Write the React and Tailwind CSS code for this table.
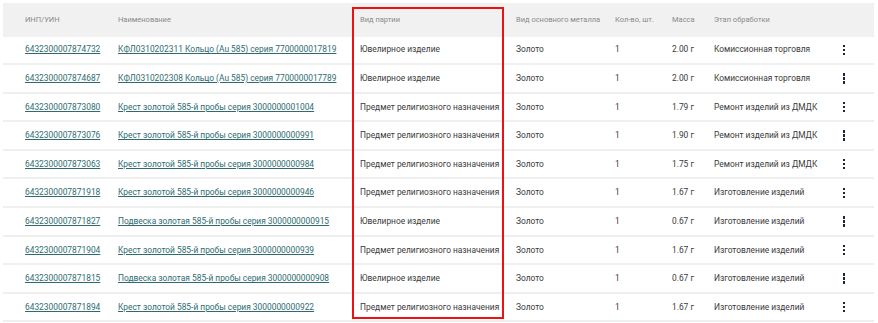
const rows = [
  ['6432300007874732', 'КФЛ0310202311 Кольцо (Au 585) серия 7700000017819', 'Ювелирное изделие', '2.00 г', 'Комиссионная торговля'],
  ['6432300007874687', 'КФЛ0310202308 Кольцо (Au 585) серия 7700000017789', 'Ювелирное изделие', '2.00 г', 'Комиссионная торговля'],
  ['6432300007873080', 'Крест золотой 585-й пробы серия 3000000001004', 'Предмет религиозного назначения', '1.79 г', 'Ремонт изделий из ДМДК'],
  ['6432300007873076', 'Крест золотой 585-й пробы серия 3000000000991', 'Предмет религиозного назначения', '1.90 г', 'Ремонт изделий из ДМДК'],
  ['6432300007873063', 'Крест золотой 585-й пробы серия 3000000000984', 'Предмет религиозного назначения', '1.75 г', 'Ремонт изделий из ДМДК'],
  ['6432300007871918', 'Крест золотой 585-й пробы серия 3000000000946', 'Предмет религиозного назначения', '1.67 г', 'Изготовление изделий'],
  ['6432300007871827', 'Подвеска золотая 585-й пробы серия 3000000000915', 'Ювелирное изделие', '0.67 г', 'Изготовление изделий'],
  ['6432300007871904', 'Крест золотой 585-й пробы серия 3000000000939', 'Предмет религиозного назначения', '1.67 г', 'Изготовление изделий'],
  ['6432300007871815', 'Подвеска золотая 585-й пробы серия 3000000000908', 'Ювелирное изделие', '0.67 г', 'Изготовление изделий'],
  ['6432300007871894', 'Крест золотой 585-й пробы серия 3000000000922', 'Предмет религиозного назначения', '1.67 г', 'Изготовление изделий'],
];

function Dots() {
  return (
    <div className="flex flex-col gap-[1.5px]">
      <span className="block w-[2px] h-[2.5px] bg-[#1c2536]" />
      <span className="block w-[2px] h-[2.5px] bg-[#1c2536]" />
      <span className="block w-[2px] h-[2.5px] bg-[#1c2536]" />
    </div>
  );
}

export default function App() {
  const cols = 'grid grid-cols-[107px_242px_156px_99px_57px_42px_124px_44px]';
  return (
    <div className="w-[878px] h-[323px] bg-white pt-[3px] pl-[3px] font-['Roboto',sans-serif] relative overflow-hidden">
      <div className="w-[871px]">
        {/* header */}
        <div className={`${cols} h-[33.5px] items-center bg-[#f1f1f1] text-[7.5px] text-[#8a8a8a]`}>
          <div className="pl-[22px]">ИНП/УИН</div>
          <div className="pl-2">Наименование</div>
          <div className="pl-2">Вид партии</div>
          <div className="pl-2">Вид основного металла</div>
          <div className="pl-2">Кол-во, шт.</div>
          <div className="pl-2">Масса</div>
          <div className="pl-2">Этап обработки</div>
          <div />
        </div>
        {rows.map((r) => (
          <div
            key={r[0]}
            className={`${cols} h-[28.6px] items-center border-b-2 border-[#efefef] text-[8.4px] text-[#3a3a3a]`}
          >
            <div className="pl-[22px]">
              <span className="underline text-[#2d6b70]">{r[0]}</span>
            </div>
            <div className="pl-2 whitespace-nowrap">
              <span className="underline text-[#2d6b70]">{r[1]}</span>
            </div>
            <div className="pl-2 whitespace-nowrap">{r[2]}</div>
            <div className="pl-2">Золото</div>
            <div className="pl-2">1</div>
            <div className="pl-2 whitespace-nowrap">{r[3]}</div>
            <div className="pl-2 whitespace-nowrap">{r[4]}</div>
            <div className="pl-[13px]">
              <Dots />
            </div>
          </div>
        ))}
      </div>
      {/* highlight frame */}
      <div className="absolute left-[352px] top-[7px] w-[152px] h-[312px] border-2 border-[#ee1111]" />
    </div>
  );
}
